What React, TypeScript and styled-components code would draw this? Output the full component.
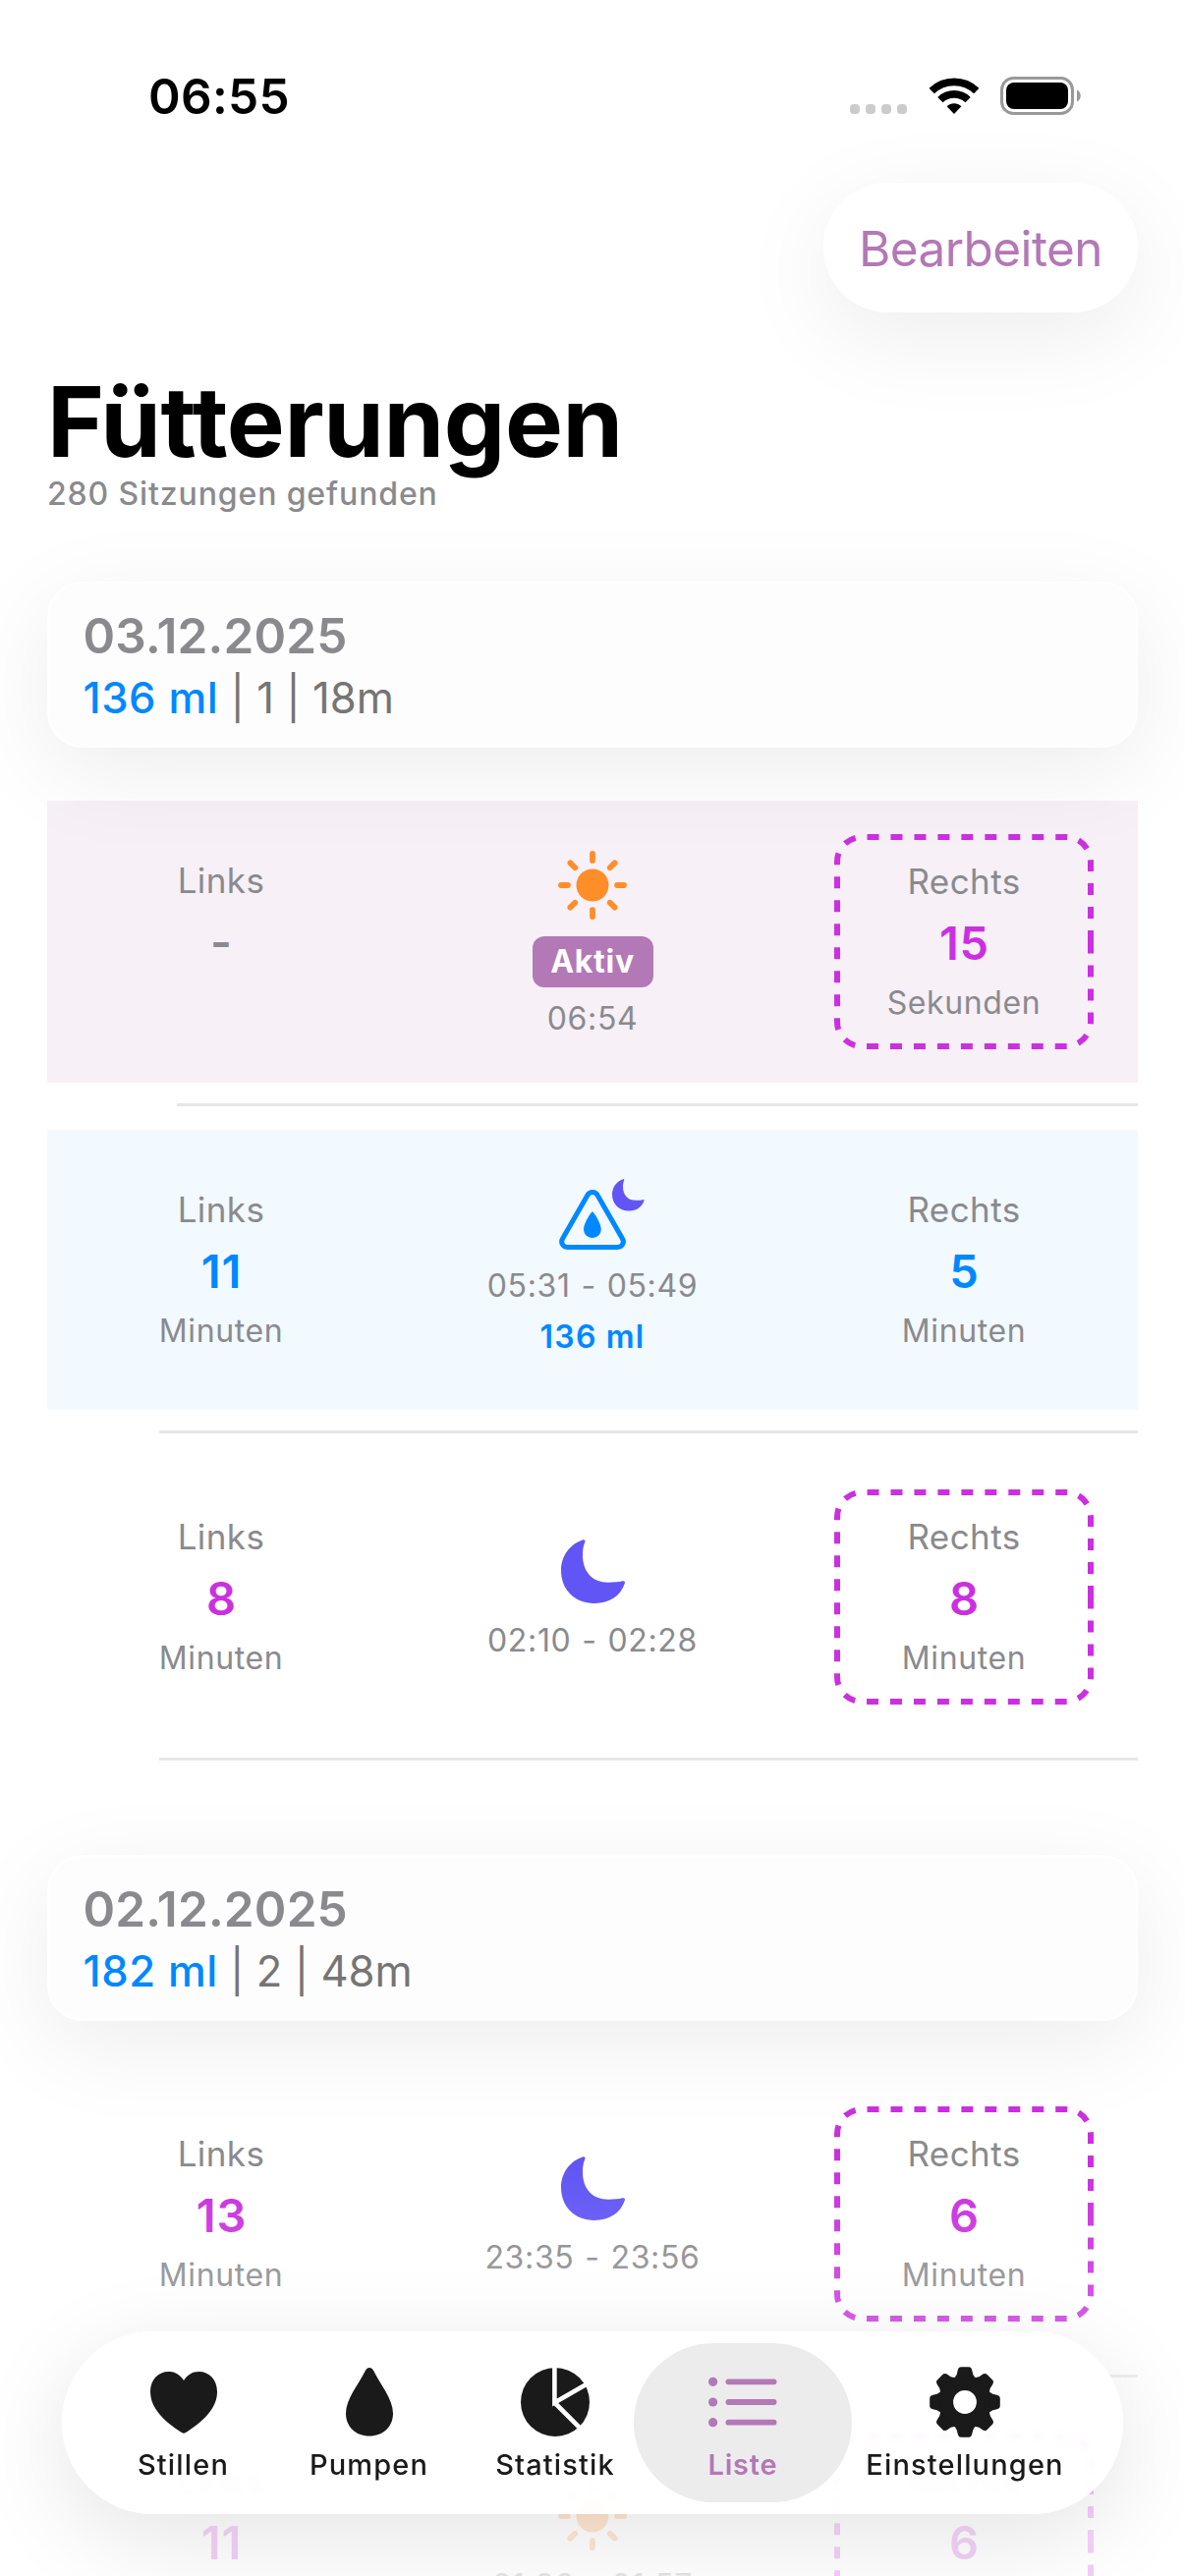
import React from "react";
import styled, { createGlobalStyle, css } from "styled-components";

const color = {
  accent: "#b378b6",
  magenta: "#cb30e0",
  blue: "#0088ff",
  indigo: "#6155f5",
  orange: "#ff8d28",
  gray: "#8a8a8e",
  ink: "#1a1a1a",
  line: "#e6e6e6",
};

const GlobalStyle = createGlobalStyle`
  * { box-sizing: border-box; }
  body {
    margin: 0;
    background: #fff;
    font-family: Inter, "Liberation Sans", sans-serif;
    -webkit-font-smoothing: antialiased;
  }
  svg { display: block; flex: none; overflow: visible; }
`;

const Screen = styled.div`
  position: relative;
  width: 1206px;
  height: 2622px;
  overflow: hidden;
  display: flex;
  flex-direction: column;
  background: #fff;
`;

const StatusBar = styled.header`
  height: 186px;
  flex: none;
  display: flex;
  justify-content: space-between;
  align-items: flex-start;
  padding: 68px 106px 0 151px;
`;

const Clock = styled.time`
  font-size: 49.5px;
  line-height: 60px;
  font-weight: 600;
  letter-spacing: 0.3px;
  color: #000;
`;

const StatusIcons = styled.div`
  display: flex;
  align-items: center;
  gap: 22.5px;
  height: 59px;
`;

const SignalDots = styled.div`
  display: flex;
  gap: 6px;
  padding-top: 26px;
`;

const SignalDot = styled.span`
  width: 10px;
  height: 10px;
  border-radius: 4px;
  background: #cbcbcb;
`;

const Toolbar = styled.div`
  flex: none;
  display: flex;
  justify-content: flex-end;
  padding-right: 48px;
`;

const EditButton = styled.button`
  width: 320px;
  height: 132px;
  padding: 1px 0 0;
  border: 0;
  border-radius: 66px;
  background: #fff;
  box-shadow: 0 24px 96px rgba(0, 0, 0, 0.075);
  font-family: inherit;
  font-size: 49.5px;
  font-weight: 400;
  letter-spacing: -0.6px;
  color: ${color.accent};
`;

const Heading = styled.div`
  flex: none;
  padding: 51px 48px 0;
  height: 274px;
`;

const Title = styled.h1`
  margin: 0;
  font-size: 99px;
  line-height: 120px;
  font-weight: 700;
  letter-spacing: -0.4px;
  color: #000;
`;

const Subtitle = styled.p`
  margin: -8px 0 0;
  font-size: 32px;
  line-height: 43px;
  font-weight: 500;
  letter-spacing: 0.87px;
  color: ${color.gray};
`;

const DayCard = styled.section`
  position: relative;
  z-index: 1;
  flex: none;
  display: flex;
  flex-direction: column;
  gap: 7px;
  height: 169px;
  margin: 0 48px;
  padding: 23px 34.5px 0;
  border: 2px solid #fff;
  border-radius: 36px;
  background: #fdfdfd;
  box-shadow: 0 24px 96px rgba(0, 0, 0, 0.075);
`;

const DayDate = styled.h2`
  margin: 0;
  font-size: 49.5px;
  line-height: 60px;
  font-weight: 600;
  letter-spacing: 0.15px;
  color: ${color.gray};
`;

const DaySummary = styled.p`
  margin: 0;
  font-size: 43.6px;
  line-height: 53px;
  letter-spacing: 0;
  color: #757575;
  white-space: pre;
`;

const DayVolume = styled.span`
  font-weight: 500;
  letter-spacing: 0.6px;
  color: ${color.blue};
`;

const DayList = styled.main`
  flex: none;
  display: flex;
  flex-direction: column;
  gap: 72px;
`;

const Sessions = styled.div`
  flex: none;
  display: flex;
  flex-direction: column;
  padding: 54px 48px 0;
`;

const Row = styled.article<{ $tint?: string; $height: number }>`
  flex: none;
  display: flex;
  justify-content: space-between;
  align-items: center;
  height: ${(p) => p.$height}px;
  padding: 0 45px;
  background: ${(p) => p.$tint ?? "transparent"};
`;

const Divider = styled.hr<{ $inset: number }>`
  flex: none;
  width: auto;
  height: 3px;
  margin: 21px 0 24px ${(p) => p.$inset}px;
  border: 0;
  background: ${color.line};
`;

const SideBox = styled.div<{ $raised: boolean }>`
  position: relative;
  width: 264px;
  height: 219px;
  flex: none;
  display: flex;
  flex-direction: column;
  align-items: center;
  padding-top: ${(p) => (p.$raised ? 23 : 24)}px;
`;

const DashFrame = styled.svg`
  position: absolute;
  inset: 0;
`;

const SideLabel = styled.span`
  font-size: 35px;
  line-height: 48px;
  letter-spacing: 0.4px;
  color: ${color.gray};
`;

const SideValue = styled.span<{ $color: string }>`
  font-size: 47px;
  line-height: 78px;
  font-weight: 600;
  letter-spacing: 0.8px;
  margin-right: -0.8px;
  font-feature-settings: "calt" 0;
  font-kerning: none;
  color: ${(p) => p.$color};
`;

const SideUnit = styled.span`
  font-size: 32px;
  line-height: 43px;
  letter-spacing: 0.6px;
  color: ${color.gray};
`;

const Middle = styled.div<{ $top: number; $gap: number }>`
  align-self: flex-start;
  flex: 1;
  display: flex;
  flex-direction: column;
  align-items: center;
  gap: ${(p) => p.$gap}px;
  padding-top: ${(p) => p.$top}px;
`;

const smallText = css`
  font-size: 32px;
  line-height: 43px;
  white-space: nowrap;
`;

const TimeRange = styled.span`
  ${smallText}
  letter-spacing: 0.65px;
  word-spacing: 1.2px;
  color: ${color.gray};
`;

const Volume = styled.span`
  ${smallText}
  margin-top: -6px;
  font-weight: 600;
  letter-spacing: 1.2px;
  color: ${color.blue};
`;

const ActiveBadge = styled.span`
  ${smallText}
  display: flex;
  align-items: center;
  justify-content: center;
  width: 123px;
  height: 52px;
  margin: 4px 0 -3px;
  padding-bottom: 2px;
  border-radius: 12px;
  background: ${color.accent};
  font-weight: 700;
  letter-spacing: 0.7px;
  color: #fff;
`;

const PumpIcon = styled.div`
  position: relative;
`;

const PumpMoon = styled.div`
  position: absolute;
  left: 54px;
  top: -11px;
`;

const BottomFade = styled.div`
  position: absolute;
  left: 0;
  right: 0;
  bottom: 0;
  height: 422px;
  z-index: 2;
  background: linear-gradient(
    rgba(255, 255, 255, 0) 0,
    rgba(255, 255, 255, 0.1) 90px,
    rgba(255, 255, 255, 0.21) 160px,
    rgba(255, 255, 255, 0.5) 260px,
    rgba(255, 255, 255, 0.8) 370px,
    rgba(255, 255, 255, 0.76) 422px
  );
`;

const TabBar = styled.nav`
  position: absolute;
  left: 63px;
  bottom: 63px;
  z-index: 3;
  width: 1080px;
  height: 186px;
  display: flex;
  padding-left: 29px;
  border-radius: 93px;
  background: rgba(255, 255, 255, 0.91);
  backdrop-filter: blur(3px);
  box-shadow: 0 24px 96px rgba(0, 0, 0, 0.105);
`;

const Tab = styled.a<{ $width: number; $active?: boolean }>`
  position: relative;
  flex: none;
  width: ${(p) => p.$width}px;
  display: flex;
  flex-direction: column;
  align-items: center;
  padding-top: 36px;
  font-size: 29px;
  line-height: 36px;
  font-weight: 500;
  letter-spacing: 1.15px;
  color: ${(p) => (p.$active ? color.accent : color.ink)};

  ${(p) =>
    p.$active &&
    css`
      font-weight: 600;
      letter-spacing: 0.8px;
      &::before {
        content: "";
        position: absolute;
        z-index: -1;
        inset: 12px -15px;
        border-radius: 81px;
        background: #ececec;
      }
    `}
`;

const TabIcon = styled.span`
  height: 72px;
  margin-bottom: 10px;
  display: flex;
  align-items: center;
`;

const Wifi = () => (
  <svg width="50" height="38" viewBox="0 0 50 38" fill="none" stroke="#000" strokeWidth="7.6">
    <path d="M2.2 13.6A32.8 32.8 0 0 1 47.8 13.6" />
    <path d="M10.9 22.6A20.2 20.2 0 0 1 39.1 22.6" />
    <path d="M25 37 17.6 29.3C21.6 25.2 28.4 25.2 32.4 29.3Z" fill="#000" stroke="none" />
  </svg>
);

const Battery = () => (
  <svg width="82" height="39" viewBox="0 0 82 39">
    <rect x="1.5" y="1.5" width="72" height="36" rx="12" fill="none" stroke="#999" strokeWidth="3" />
    <rect x="6" y="6" width="63" height="27" rx="8" fill="#000" />
    <path d="M78 13.5C83 15.5 83 23.5 78 25.5Z" fill="#999" />
  </svg>
);

const rays = [0, 45, 90, 135, 180, 225, 270, 315];

const Sun = () => (
  <svg width="70" height="70" viewBox="-35 -35 70 70">
    <circle r="16.5" fill={color.orange} />
    {rays.map((angle) => (
      <line
        key={angle}
        x1="0"
        x2="0"
        y1="-32"
        y2="-25.1"
        transform={`rotate(${angle})`}
        stroke={color.orange}
        strokeWidth="5.8"
        strokeLinecap="round"
      />
    ))}
  </svg>
);

const Moon = ({ size = 65 }: { size?: number }) => (
  <svg width={size} height={size} viewBox="0 0 65 65" fill={color.indigo}>
    <path d="M22.5.3C24.3-.1 24.9 1.2 24.2 3C22.6 6.5 22 11 22 16C22 33 32 43.7 48 43.7C54 43.7 59 43.3 62.3 42.3C64.3 41.7 65.5 42.8 64.9 44.6C60.5 57.5 49.5 65 34 65C14 65 0 51 0 31.5C0 17 9 4.5 22.5.3Z" />
  </svg>
);

const Pump = () => (
  <PumpIcon>
    <svg width="68" height="61" viewBox="0 0 68 61">
      <path
        d="M28.5 6.2C31 1.4 37 1.4 39.5 6.2L64.3 49.5C67 54 64 58.5 59 58.5H9C4 58.5 1 54 3.7 49.5Z"
        fill="none"
        stroke={color.blue}
        strokeWidth="5"
      />
      <path
        d="M33.9 22.3C35 22.3 42.7 34 42.7 40.3C42.7 45.5 38.8 49 33.9 49C29 49 25 45.5 25 40.3C25 34 32.8 22.3 33.9 22.3Z"
        fill={color.blue}
      />
    </svg>
    <PumpMoon>
      <Moon size={32.5} />
    </PumpMoon>
  </PumpIcon>
);

const Heart = () => (
  <svg width="68" height="63" viewBox="0 0 68 63" fill={color.ink}>
    <path d="M34 62.7C32.8 62.7 31.5 61.8 30 60.8C12 49 0 36 0 20.5C0 8 8.2 0 18.6 0C25.2 0 30.6 3.4 34 9C37.4 3.4 42.8 0 49.4 0C59.8 0 68 8 68 20.5C68 36 56 49 38 60.8C36.5 61.8 35.2 62.7 34 62.7Z" />
  </svg>
);

const Drop = () => (
  <svg width="48" height="70" viewBox="0 0 48 70" fill={color.ink}>
    <path d="M24 0C26.2 0 27.4 1.5 28.6 3.8C35 17 48 32 48 46.5C48 60 38 69.5 24 69.5C10 69.5 0 60 0 46.5C0 32 13 17 19.4 3.8C20.6 1.5 21.8 0 24 0Z" />
  </svg>
);

const Pie = () => (
  <svg width="70" height="70" viewBox="0 0 70 70">
    <circle cx="35" cy="35" r="35" fill={color.ink} />
    <path
      d="M34.4 -1V35.5L67 16.8M34.4 35.5L60.5 61.6"
      fill="none"
      stroke="#fefefe"
      strokeWidth="4.6"
    />
  </svg>
);

const List = () => (
  <svg width="71" height="52" viewBox="0 0 71 52" fill={color.accent}>
    {[5.3, 26, 46.7].map((y) => (
      <g key={y}>
        <circle cx="4.6" cy={y} r="4.6" />
        <rect x="17.5" y={y - 2.9} width="52" height="5.8" rx="2.9" />
      </g>
    ))}
  </svg>
);

const Gear = () => (
  <svg width="72" height="72" viewBox="-36 -36 72 72">
    <circle r="19.6" fill="none" stroke={color.ink} strokeWidth="15.4" />
    {rays.map((angle) => (
      <path
        key={angle}
        d="M-8.6-25.5C-7-27-6.6-29-6.3-31.4C-5.9-33.8-5.4-34.6-4-34.6H4C5.4-34.6 5.9-33.8 6.3-31.4C6.6-29 7-27 8.6-25.5Z"
        transform={`rotate(${angle})`}
        fill={color.ink}
        stroke={color.ink}
        strokeWidth="2.4"
        strokeLinejoin="round"
      />
    ))}
  </svg>
);

interface SideProps {
  label: string;
  value: string;
  unit?: string;
  tone?: string;
  framed?: boolean;
}

const Side = ({ label, value, unit, tone = color.magenta, framed }: SideProps) => (
  <SideBox $raised={!unit}>
    {framed && (
      <DashFrame width="264" height="219" viewBox="0 0 264 219">
        <path
          d="M261 109.5V191A25 25 0 0 1 236 216H28A25 25 0 0 1 3 191V28A25 25 0 0 1 28 3H236A25 25 0 0 1 261 28Z"
          fill="none"
          stroke={color.magenta}
          strokeWidth="6"
          strokeDasharray="12 12"
          pathLength="899.5"
        />
      </DashFrame>
    )}
    <SideLabel>{label}</SideLabel>
    <SideValue $color={tone}>{value}</SideValue>
    {unit && <SideUnit>{unit}</SideUnit>}
  </SideBox>
);

interface DayProps {
  date: string;
  volume: string;
  rest: string;
  children: React.ReactNode;
}

const Day = ({ date, volume, rest, children }: DayProps) => (
  <div>
    <DayCard>
      <DayDate>{date}</DayDate>
      <DaySummary>
        <DayVolume>{volume}</DayVolume>
        {rest}
      </DaySummary>
    </DayCard>
    <Sessions>{children}</Sessions>
  </div>
);

const tabs = [
  { name: "Stillen", icon: <Heart />, width: 189 },
  { name: "Pumpen", icon: <Drop />, width: 189 },
  { name: "Statistik", icon: <Pie />, width: 190 },
  { name: "Liste", icon: <List />, width: 192, active: true },
  { name: "Einstellungen", icon: <Gear />, width: 260 },
];

export default function App() {
  return (
    <>
      <GlobalStyle />
      <Screen>
        <StatusBar>
          <Clock>06:55</Clock>
          <StatusIcons>
            <SignalDots>
              <SignalDot />
              <SignalDot />
              <SignalDot />
              <SignalDot />
            </SignalDots>
            <Wifi />
            <Battery />
          </StatusIcons>
        </StatusBar>
        <Toolbar>
          <EditButton>Bearbeiten</EditButton>
        </Toolbar>
        <Heading>
          <Title>Fütterungen</Title>
          <Subtitle>280 Sitzungen gefunden</Subtitle>
        </Heading>

        <DayList>
          <Day date="03.12.2025" volume="136 ml" rest=" | 1 | 18m">
            <Row $tint="#f7f0f7" $height={287}>
              <Side label="Links" value="-" tone={color.gray} />
              <Middle $top={51} $gap={13}>
                <Sun />
                <ActiveBadge>Aktiv</ActiveBadge>
                <TimeRange>06:54</TimeRange>
              </Middle>
              <Side label="Rechts" value="15" unit="Sekunden" framed />
            </Row>
            <Divider $inset={132} />
            <Row $tint="#f2f9ff" $height={285}>
              <Side label="Links" value="11" unit="Minuten" tone={color.blue} />
              <Middle $top={61} $gap={15}>
                <Pump />
                <TimeRange>05:31 - 05:49</TimeRange>
                <Volume>136 ml</Volume>
              </Middle>
              <Side label="Rechts" value="5" unit="Minuten" tone={color.blue} />
            </Row>
            <Divider $inset={114} />
            <Row $height={285}>
              <Side label="Links" value="8" unit="Minuten" />
              <Middle $top={84} $gap={16}>
                <Moon />
                <TimeRange>02:10 - 02:28</TimeRange>
              </Middle>
              <Side label="Rechts" value="8" unit="Minuten" framed />
            </Row>
            <Divider $inset={114} />
          </Day>

          <Day date="02.12.2025" volume="182 ml" rest=" | 2 | 48m">
            <Row $height={285}>
              <Side label="Links" value="13" unit="Minuten" />
              <Middle $top={84} $gap={16}>
                <Moon />
                <TimeRange>23:35 - 23:56</TimeRange>
              </Middle>
              <Side label="Rechts" value="6" unit="Minuten" framed />
            </Row>
            <Divider $inset={114} />
            <Row $height={285}>
              <Side label="Links" value="11" unit="Minuten" />
              <Middle $top={82} $gap={14}>
                <Sun />
                <TimeRange>21:38 - 21:57</TimeRange>
              </Middle>
              <Side label="Rechts" value="6" unit="Minuten" framed />
            </Row>
          </Day>
        </DayList>

        <BottomFade />
        <TabBar>
          {tabs.map((tab) => (
            <Tab key={tab.name} $width={tab.width} $active={tab.active}>
              <TabIcon>{tab.icon}</TabIcon>
              {tab.name}
            </Tab>
          ))}
        </TabBar>
      </Screen>
    </>
  );
}
